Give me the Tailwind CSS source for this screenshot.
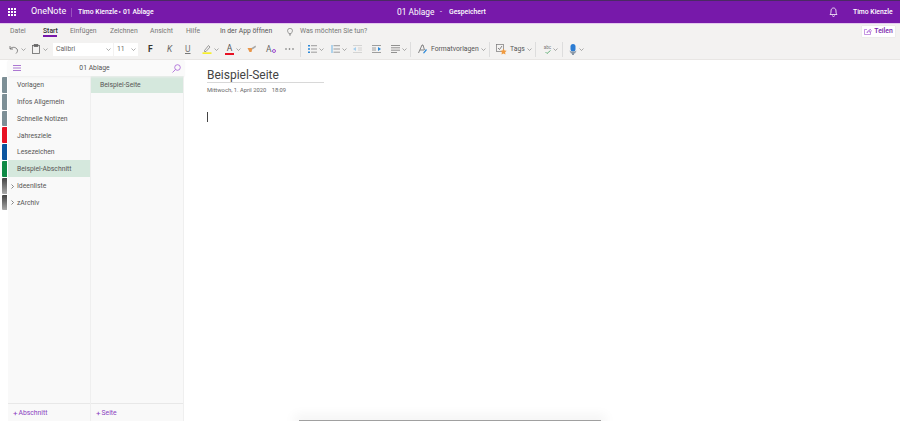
<!DOCTYPE html>
<html lang="de">
<head>
<meta charset="UTF-8">
<title>OneNote</title>
<script src="https://cdn.jsdelivr.net/npm/@tailwindcss/browser@4"></script>
</head>
<body class="relative h-[421px] w-[900px] overflow-hidden bg-white font-['Roboto',sans-serif] text-[#444]">

<!-- top bar -->
<header class="flex h-[24px] items-center border-t border-b border-t-[#4a2a63] border-b-[#e3c8ee] bg-[#7719aa] text-white">
  <svg class="ml-[8px] h-[8px] w-[8px]" viewBox="0 0 8 8" fill="#fff"><rect width="2" height="2"/><rect x="3" width="2" height="2"/><rect x="6" width="2" height="2"/><rect y="3" width="2" height="2"/><rect x="3" y="3" width="2" height="2"/><rect x="6" y="3" width="2" height="2"/><rect y="6" width="2" height="2"/><rect x="3" y="6" width="2" height="2"/><rect x="6" y="6" width="2" height="2"/></svg>
  <span class="ml-[15px] w-[40px] text-[9px]">OneNote</span>
  <span class="h-[9px] w-px bg-white/25"></span>
  <span class="ml-[6px] w-[78px] text-[6.8px] font-medium whitespace-nowrap">Timo Kienzle <span class="text-[4px] align-[1px]">▸</span> 01 Ablage</span>
  <span class="ml-[241px] w-[35px] text-[8.4px] whitespace-nowrap">01 Ablage</span>
  <span class="ml-[8px] w-[2px] text-[7px]">-</span>
  <span class="ml-[7px] w-[34px] text-[6.8px] font-medium">Gespeichert</span>
  <svg class="ml-[346px] h-[10px] w-[9px]" viewBox="0 0 9 10" fill="none" stroke="#fff" stroke-width=".8"><path d="M1 7.5c1-1 1-2 1-3.5C2 2.200 3 1 4.500 1S7 2.200 7 4c0 1.500 0 2.500 1 3.500z"/><path d="M3.500 8.500a1 1 0 0 0 2 0"/></svg>
  <span class="ml-[15px] text-[6.8px] font-medium whitespace-nowrap">Timo Kienzle</span>
</header>

<!-- ribbon -->
<div class="h-[36px] border-b border-[#e8e6e4] bg-[#f3f2f1]">
  <nav class="flex h-[15px] items-center text-[6.8px] text-[#777]">
    <span class="ml-[10px] w-[33px]">Datei</span>
    <span class="relative w-[27px] font-medium text-[#333]">Start<span class="absolute top-[9px] left-0 h-[1.5px] w-[14px] bg-[#7719aa]"></span></span>
    <span class="w-[40px]">Einfügen</span>
    <span class="w-[40px]">Zeichnen</span>
    <span class="w-[36px]">Ansicht</span>
    <span class="w-[34px]">Hilfe</span>
    <span class="w-[67px] text-[#555]">In der App öffnen</span>
    <svg class="mr-[7px] h-[8px] w-[6px]" viewBox="0 0 6 8" fill="none" stroke="#666" stroke-width=".6"><path d="M1.800 5.500C1.500 4.500.5 4 .5 2.800a2.500 2.500 0 0 1 5 0C5.500 4 4.500 4.500 4.200 5.500zM2.200 6.500h1.600M2.500 7.500h1"/></svg>
    <span class="whitespace-nowrap">Was möchten Sie tun?</span>
    <span class="mr-[5px] ml-auto flex h-[11px] w-[33px] items-center justify-center gap-[2px] bg-white text-[6.8px] font-medium text-[#7719aa] shadow-[0_0_1px_#ccc]">
      <svg class="h-[7px] w-[8px]" viewBox="0 0 8 7" fill="none" stroke="#a04fd0" stroke-width=".6"><path d="M3 1.500H.5v5h6V4M3 5c0-1.800 1-2.800 3-2.800V1l1.500 1.800L6 4.500V3.300C4.500 3.300 3.500 4 3 5z"/></svg>Teilen
    </span>
  </nav>
  <div class="flex h-[20px] items-center text-[#666]">
    <!-- undo -->
    <svg class="ml-[9px] h-[9px] w-[10px]" viewBox="0 0 10 9" fill="none" stroke="#666" stroke-width=".8"><path d="M1 1v3h3M1 4c1.500-2 5-2.500 7 0 1 1.500.5 3-1 4.500"/></svg>
    <svg class="ml-[2px] h-[3px] w-[5px]" viewBox="0 0 5 3" fill="none" stroke="#777" stroke-width=".6"><path d="M.5.500 2.500 2.500 4.500.5"/></svg>
    <!-- paste -->
    <svg class="ml-[6px] h-[10px] w-[8px]" viewBox="0 0 8 10" fill="none" stroke="#666" stroke-width=".8"><rect x=".5" y="1.500" width="7" height="8"/><rect x="2.200" y=".5" width="3.600" height="2" fill="#666"/></svg>
    <svg class="ml-[3px] h-[3px] w-[5px]" viewBox="0 0 5 3" fill="none" stroke="#777" stroke-width=".6"><path d="M.5.500 2.500 2.500 4.500.5"/></svg>
    <!-- font and size -->
    <div class="ml-[5px] flex h-[13px] w-[60px] items-center justify-between bg-white pr-[2px] pl-[3px] text-[6.8px] text-[#666]">Calibri<svg class="h-[3px] w-[5px]" viewBox="0 0 5 3" fill="none" stroke="#777" stroke-width=".6"><path d="M.5.500 2.500 2.500 4.500.5"/></svg></div>
    <div class="ml-px flex h-[13px] w-[24px] items-center justify-between bg-white pr-[2px] pl-[3px] text-[6.8px] text-[#666]">11<svg class="h-[3px] w-[5px]" viewBox="0 0 5 3" fill="none" stroke="#777" stroke-width=".6"><path d="M.5.500 2.500 2.500 4.500.5"/></svg></div>
    <!-- text style -->
    <span class="ml-[10px] w-[19px] text-[8.5px] font-bold text-[#333]">F</span>
    <span class="w-[18px] text-[8.5px] text-[#666] italic">K</span>
    <span class="w-[14px] text-[8.5px] text-[#777] underline">U</span>
    <svg class="ml-[3px] h-[10px] w-[10px]" viewBox="0 0 10 10" fill="none"><path d="M2.500 6.500 6.500 1.500 8 3 4 7.500H2.500z" stroke="#777" stroke-width=".7"/><rect x=".5" y="8.300" width="9" height="1.700" fill="#f6ee2c"/></svg>
    <svg class="ml-[2px] h-[3px] w-[5px]" viewBox="0 0 5 3" fill="none" stroke="#777" stroke-width=".6"><path d="M.5.500 2.500 2.500 4.500.5"/></svg>
    <span class="ml-[6px] w-[9px] border-b-[2px] border-[#e81123] text-center text-[8.5px] leading-[9px] text-[#555]">A</span>
    <svg class="ml-[2px] h-[3px] w-[5px]" viewBox="0 0 5 3" fill="none" stroke="#777" stroke-width=".6"><path d="M.5.500 2.500 2.500 4.500.5"/></svg>
    <svg class="ml-[6px] h-[8px] w-[10px]" viewBox="0 0 9 8"><path d="M0 3h5l-1 4H2z" fill="#e8964a"/><path d="M4 3 8 .5 8.500 2 5 4.500z" fill="#a8a8a8"/></svg>
    <span class="relative ml-[9px] w-[9px] text-[8.5px] text-[#666]">A<span class="absolute top-[6px] left-[6px] h-[4px] w-[4px] rounded-full border border-[#a04fd0]"></span></span>
    <svg class="ml-[10px] h-[2px] w-[9px]" viewBox="0 0 9 2" fill="#666"><circle cx="1" cy="1" r=".8"/><circle cx="4.500" cy="1" r=".8"/><circle cx="8" cy="1" r=".8"/></svg>
    <span class="ml-[6px] h-[15px] w-px bg-[#ddd]"></span>
    <!-- lists -->
    <svg class="ml-[7px] h-[8px] w-[9px]" viewBox="0 0 9 8"><path d="M0 0h2v1.500H0zM0 3.200h2v1.500H0zM0 6.500h2V8H0z" fill="#2b88d8"/><path d="M3 .7h6M3 4h6M3 7.200h6" stroke="#777" stroke-width=".7"/></svg>
    <svg class="ml-[2px] h-[3px] w-[5px]" viewBox="0 0 5 3" fill="none" stroke="#777" stroke-width=".6"><path d="M.5.500 2.500 2.500 4.500.5"/></svg>
    <svg class="ml-[7px] h-[8px] w-[9px]" viewBox="0 0 9 8"><path d="M.5 0h1v8h-1z" fill="#6fb3e6"/><path d="M2.500.7H9M2.500 4H9M2.500 7.200H9" stroke="#777" stroke-width=".7"/></svg>
    <svg class="ml-[2px] h-[3px] w-[5px]" viewBox="0 0 5 3" fill="none" stroke="#777" stroke-width=".6"><path d="M.5.500 2.500 2.500 4.500.5"/></svg>
    <svg class="ml-[6px] h-[8px] w-[9px]" viewBox="0 0 9 8"><path d="M0 .5h9M0 7.500h9M5 3h4M5 5h4" stroke="#ccc" stroke-width=".8"/><path d="M0 4 3 2v4z" fill="#a6cfee"/></svg>
    <svg class="ml-[10px] h-[8px] w-[9px]" viewBox="0 0 9 8"><path d="M0 .5h9M0 7.500h9M0 3h4M0 5h4" stroke="#888" stroke-width=".8"/><path d="M9 4 6 2v4z" fill="#2b88d8"/></svg>
    <svg class="ml-[10px] h-[8px] w-[9px]" viewBox="0 0 9 8"><path d="M0 .5h9M0 2.800h9M0 5.200h9M0 7.500h6" stroke="#777" stroke-width=".8"/></svg>
    <svg class="ml-[2px] h-[3px] w-[5px]" viewBox="0 0 5 3" fill="none" stroke="#777" stroke-width=".6"><path d="M.5.500 2.500 2.500 4.500.5"/></svg>
    <span class="ml-[3px] h-[15px] w-px bg-[#ddd]"></span>
    <!-- styles, tags -->
    <svg class="ml-[7px] h-[10px] w-[10px]" viewBox="0 0 10 10" fill="none"><path d="M.5 9 4 1h1l1.500 5M2 6h4" stroke="#666" stroke-width=".8"/><path d="M5 9l3-4 1 1-3 3.500z" fill="#2b88d8"/></svg>
    <span class="ml-[3px] w-[46px] text-[6.8px] whitespace-nowrap text-[#555]">Formatvorlagen</span>
    <svg class="ml-[4px] h-[3px] w-[5px]" viewBox="0 0 5 3" fill="none" stroke="#777" stroke-width=".6"><path d="M.5.500 2.500 2.500 4.500.5"/></svg>
    <span class="ml-[3px] h-[15px] w-px bg-[#ddd]"></span>
    <svg class="ml-[6px] h-[11px] w-[11px]" viewBox="0 0 11 11"><rect x=".5" y=".5" width="7" height="7" fill="none" stroke="#777" stroke-width=".7"/><path d="M2 4l1.500 1.500L6 2" fill="none" stroke="#555" stroke-width=".7"/><path d="M7.500 4.500l1 2 2.200.3-1.600 1.500.4 2.200-2-1-2 1 .4-2.200-1.600-1.500 2.200-.3z" fill="#f09a3e"/></svg>
    <span class="ml-[3px] w-[13px] text-[6.8px] text-[#555]">Tags</span>
    <svg class="ml-[4px] h-[3px] w-[5px]" viewBox="0 0 5 3" fill="none" stroke="#777" stroke-width=".6"><path d="M.5.500 2.500 2.500 4.500.5"/></svg>
    <span class="ml-[3px] h-[15px] w-px bg-[#ddd]"></span>
    <!-- spelling, dictate -->
    <span class="ml-[7px] flex w-[9px] flex-col items-center text-[4.5px] leading-[5px] text-[#777]">abc<svg class="h-[4px] w-[6px]" viewBox="0 0 6 4" fill="none" stroke="#4aa564" stroke-width=".8"><path d="M.5 2l1.500 1.500L5.500.5"/></svg></span>
    <svg class="ml-px h-[3px] w-[5px]" viewBox="0 0 5 3" fill="none" stroke="#777" stroke-width=".6"><path d="M.5.500 2.500 2.500 4.500.5"/></svg>
    <span class="ml-[4px] h-[15px] w-px bg-[#ddd]"></span>
    <svg class="ml-[6px] h-[11px] w-[8px]" viewBox="0 0 8 11"><rect x="1.500" width="5" height="7.500" rx="2.500" fill="#2b7cd3"/><path d="M0 6c1 2 7 2 8 0L6 9.500H2z" fill="#8a97a6"/><rect x="3" y="9" width="2" height="2" fill="#8a97a6"/></svg>
    <svg class="ml-[2px] h-[3px] w-[5px]" viewBox="0 0 5 3" fill="none" stroke="#777" stroke-width=".6"><path d="M.5.500 2.500 2.500 4.500.5"/></svg>
  </div>
</div>

<div class="flex h-[361px]">
  <!-- notebook tabs -->
  <div class="flex w-[8px] flex-col gap-px pt-[17px] pr-px pl-[2px]">
    <span class="h-[15.8px] rounded-l-[1px] bg-[#7d8f96]"></span>
    <span class="h-[15.8px] rounded-l-[1px] bg-[#7d8f96]"></span>
    <span class="h-[15.8px] rounded-l-[1px] bg-[#7d8f96]"></span>
    <span class="h-[15.8px] rounded-l-[1px] bg-[#e81123]"></span>
    <span class="h-[15.8px] rounded-l-[1px] bg-[#0b559f]"></span>
    <span class="h-[15.8px] rounded-l-[1px] bg-[#0f8a45]"></span>
    <span class="h-[15.8px] rounded-l-[1px] bg-gradient-to-b from-[#444] to-[#aaa]"></span>
    <span class="h-[15.8px] rounded-l-[1px] bg-gradient-to-b from-[#444] to-[#aaa]"></span>
  </div>

  <!-- navigation -->
  <div class="flex w-[176px] flex-col bg-[#f9f9f9]">
    <div class="relative flex h-[16px] items-center justify-center bg-[#fafafa] text-[6.8px] text-[#555] shadow-[0_1px_2px_#eee]">
      <svg class="absolute left-[5px] h-[6px] w-[8px]" viewBox="0 0 8 6" stroke="#8a3fc0" stroke-width=".7"><path d="M0 .5h8M0 3h8M0 5.500h8"/></svg>
      <span class="-ml-[3px]">01 Ablage</span>
      <svg class="absolute right-[3px] h-[9px] w-[9px]" viewBox="0 0 9 9" fill="none" stroke="#a65fd6" stroke-width=".8"><circle cx="5.500" cy="3.500" r="2.800"/><path d="M3.500 5.500.5 8.500"/></svg>
    </div>
    <div class="flex flex-1">
      <!-- sections -->
      <div class="flex w-[83px] flex-col border-r border-[#efefef] text-[6.8px] text-[#555]">
        <div class="flex h-[16.8px] items-center pt-[2px] pl-[9px]">Vorlagen</div>
        <div class="flex h-[16.8px] items-center pt-[2px] pl-[9px]">Infos Allgemein</div>
        <div class="flex h-[16.8px] items-center pt-[2px] pl-[9px]">Schnelle Notizen</div>
        <div class="flex h-[16.8px] items-center pt-[2px] pl-[9px]">Jahresziele</div>
        <div class="flex h-[16.8px] items-center pt-[2px] pl-[9px]">Lesezeichen</div>
        <div class="flex h-[16.8px] items-center bg-[#d5e8dd] pt-[2px] pl-[9px]">Beispiel-Abschnitt</div>
        <div class="relative flex h-[16.8px] items-center pt-[2px] pl-[9px]"><svg class="absolute left-[3px] h-[5px] w-[3px]" viewBox="0 0 3 5" fill="none" stroke="#555" stroke-width=".7"><path d="M.5.500 2.500 2.500.5 4.500"/></svg>Ideenliste</div>
        <div class="relative flex h-[16.8px] items-center pt-[2px] pl-[9px]"><svg class="absolute left-[3px] h-[5px] w-[3px]" viewBox="0 0 3 5" fill="none" stroke="#555" stroke-width=".7"><path d="M.5.500 2.500 2.500.5 4.500"/></svg>zArchiv</div>
        <div class="mt-auto flex h-[18px] items-center gap-px border-t border-[#e8e8e8] pt-[2px] pl-[5px] text-[#8a3fc0]"><span class="text-[8px] leading-none">+</span>Abschnitt</div>
      </div>
      <!-- pages -->
      <div class="flex flex-1 flex-col border-r border-[#efefef] text-[6.8px] text-[#555]">
        <div class="flex h-[16.8px] items-center bg-[#d5e8dd] pt-[2px] pl-[9px]">Beispiel-Seite</div>
        <div class="mt-auto flex h-[18px] items-center gap-px border-t border-[#e8e8e8] pt-[2px] pl-[5px] text-[#8a3fc0]"><span class="text-[8px] leading-none">+</span>Seite</div>
      </div>
    </div>
  </div>

  <!-- page -->
  <main class="flex-1 pt-[8px] pl-[23px]">
    <h1 class="h-[15px] w-[117px] border-b border-[#d8d8d8] text-[12px] leading-[14px] text-[#444]">Beispiel-Seite</h1>
    <p class="mt-[3px] text-[5.8px] text-[#666]">Mittwoch, 1. April 2020 <span class="ml-[4px]">18:09</span></p>
    <div class="mt-[17px] h-[10px] w-px bg-[#444]"></div>
  </main>
</div>

<!-- shadow of a window below the edge -->
<div class="absolute bottom-0 left-[299px] h-px w-[302px] bg-[#a0a0a0] shadow-[0_0_12px_5px_rgba(0,0,0,0.05)]"></div>
</body>
</html>
